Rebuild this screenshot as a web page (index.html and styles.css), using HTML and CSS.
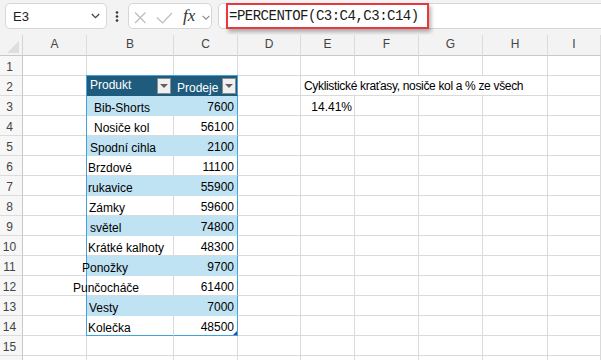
FILE: index.html
```html
<!DOCTYPE html>
<html lang="cs">
<head>
    <meta charset="UTF-8">
    <title>PERCENTOF</title>
    <link rel="stylesheet" href="styles.css">
</head>
<body>
    <div class="toolbar">
        <div class="name-box">
            <span>E3</span>
            <svg class="chevron" width="9" height="6" viewBox="0 0 9 6"><path d="M0.8 1l3.7 3.7 3.7-3.7" fill="none" stroke="#444" stroke-width="1.3"/></svg>
        </div>
        <svg class="kebab" width="4" height="11" viewBox="0 0 4 11"><circle cx="2" cy="1.5" r="1.3"/><circle cx="2" cy="5.5" r="1.3"/><circle cx="2" cy="9.5" r="1.3"/></svg>
        <div class="fn-box">
            <svg class="icon-x" width="14" height="12" viewBox="0 0 14 12"><path d="M2 0.5l10.5 10.5M12.5 0.5l-10.5 10.5" fill="none" stroke="#bcbcbc" stroke-width="1.2"/></svg>
            <svg class="icon-check" width="17" height="12" viewBox="0 0 17 12"><path d="M1 5.5l5.5 5.5 9.5-10" fill="none" stroke="#bcbcbc" stroke-width="1.2"/></svg>
            <span class="fx">fx</span>
            <svg class="chevron-sm" width="8" height="5" viewBox="0 0 8 5"><path d="M0.6 0.8l3.4 3.4 3.4-3.4" fill="none" stroke="#8a8a8a" stroke-width="1.1"/></svg>
        </div>
        <div class="formula-box">
            <span class="formula">=PERCENTOF(C3:C4,C3:C14)</span>
        </div>
    </div>

    <div class="sheet">
        <div class="corner"><div class="corner-tri"></div></div>
        <div class="ch">A</div>
        <div class="ch">B</div>
        <div class="ch">C</div>
        <div class="ch">D</div>
        <div class="ch">E</div>
        <div class="ch">F</div>
        <div class="ch">G</div>
        <div class="ch">H</div>
        <div class="ch">I</div>

        <!-- row 1 -->
        <div class="rh">1</div>
        <div class="c"></div><div class="c"></div><div class="c"></div><div class="c"></div>
        <div class="c"></div><div class="c"></div><div class="c"></div><div class="c"></div><div class="c"></div>

        <!-- row 2 -->
        <div class="rh">2</div>
        <div class="c"></div>
        <div class="c t-head t-name"><span class="head-text">Produkt</span><span class="filter"></span></div>
        <div class="c t-head t-val"><span class="head-text low">Prodeje</span><span class="filter"></span></div>
        <div class="c"></div>
        <div class="c note">Cyklistické kraťasy, nosiče kol a % ze všech</div>
        <div class="c"></div>

        <!-- row 3 -->
        <div class="rh">3</div>
        <div class="c"></div>
        <div class="c t-name band ind-7">Bib-Shorts</div>
        <div class="c t-val band">7600</div>
        <div class="c"></div>
        <div class="c num">14.41%</div>
        <div class="c"></div><div class="c"></div><div class="c"></div><div class="c"></div>

        <!-- row 4 -->
        <div class="rh">4</div>
        <div class="c"></div>
        <div class="c t-name ind-7">Nosiče kol</div>
        <div class="c t-val">56100</div>
        <div class="c"></div><div class="c"></div><div class="c"></div><div class="c"></div><div class="c"></div><div class="c"></div>

        <!-- row 5 -->
        <div class="rh">5</div>
        <div class="c"></div>
        <div class="c t-name band ind-3">Spodní cihla</div>
        <div class="c t-val band">2100</div>
        <div class="c"></div><div class="c"></div><div class="c"></div><div class="c"></div><div class="c"></div><div class="c"></div>

        <!-- row 6 -->
        <div class="rh">6</div>
        <div class="c"></div>
        <div class="c t-name ind-1">Brzdové</div>
        <div class="c t-val">11100</div>
        <div class="c"></div><div class="c"></div><div class="c"></div><div class="c"></div><div class="c"></div><div class="c"></div>

        <!-- row 7 -->
        <div class="rh">7</div>
        <div class="c"></div>
        <div class="c t-name band ind-1">rukavice</div>
        <div class="c t-val band">55900</div>
        <div class="c"></div><div class="c"></div><div class="c"></div><div class="c"></div><div class="c"></div><div class="c"></div>

        <!-- row 8 -->
        <div class="rh">8</div>
        <div class="c"></div>
        <div class="c t-name">Zámky</div>
        <div class="c t-val">59600</div>
        <div class="c"></div><div class="c"></div><div class="c"></div><div class="c"></div><div class="c"></div><div class="c"></div>

        <!-- row 9 -->
        <div class="rh">9</div>
        <div class="c"></div>
        <div class="c t-name band ind-3">světel</div>
        <div class="c t-val band">74800</div>
        <div class="c"></div><div class="c"></div><div class="c"></div><div class="c"></div><div class="c"></div><div class="c"></div>

        <!-- row 10 -->
        <div class="rh">10</div>
        <div class="c"></div>
        <div class="c t-name ind-1">Krátké kalhoty</div>
        <div class="c t-val">48300</div>
        <div class="c"></div><div class="c"></div><div class="c"></div><div class="c"></div><div class="c"></div><div class="c"></div>

        <!-- row 11 -->
        <div class="rh">11</div>
        <div class="c"></div>
        <div class="c t-name band out-5">Ponožky</div>
        <div class="c t-val band">9700</div>
        <div class="c"></div><div class="c"></div><div class="c"></div><div class="c"></div><div class="c"></div><div class="c"></div>

        <!-- row 12 -->
        <div class="rh">12</div>
        <div class="c"></div>
        <div class="c t-name out-14">Punčocháče</div>
        <div class="c t-val">61400</div>
        <div class="c"></div><div class="c"></div><div class="c"></div><div class="c"></div><div class="c"></div><div class="c"></div>

        <!-- row 13 -->
        <div class="rh">13</div>
        <div class="c"></div>
        <div class="c t-name band">Vesty</div>
        <div class="c t-val band">7000</div>
        <div class="c"></div><div class="c"></div><div class="c"></div><div class="c"></div><div class="c"></div><div class="c"></div>

        <!-- row 14 -->
        <div class="rh">14</div>
        <div class="c"></div>
        <div class="c t-name t-last ind-1">Kolečka</div>
        <div class="c t-val t-last resize">48500</div>
        <div class="c"></div><div class="c"></div><div class="c"></div><div class="c"></div><div class="c"></div><div class="c"></div>

        <!-- row 15 -->
        <div class="rh">15</div>
        <div class="c"></div><div class="c"></div><div class="c"></div><div class="c"></div>
        <div class="c"></div><div class="c"></div><div class="c"></div><div class="c"></div><div class="c"></div>

        <!-- row 16 -->
        <div class="rh"></div>
        <div class="c"></div><div class="c"></div><div class="c"></div><div class="c"></div>
        <div class="c"></div><div class="c"></div><div class="c"></div><div class="c"></div><div class="c"></div>
    </div>
</body>
</html>
```

FILE: styles.css
```css
* {
    box-sizing: border-box;
}

body {
    margin: 0;
    width: 601px;
    height: 360px;
    overflow: hidden;
    background-color: #ffffff;
    font-family: "Liberation Sans", Arial, sans-serif;
    color: #000;
}

/* formula bar */
.toolbar {
    display: flex;
    align-items: flex-start;
    height: 35px;
    padding-top: 3px;
    background-color: #f3f3f3;
}

.name-box {
    display: flex;
    align-items: center;
    justify-content: space-between;
    width: 102px;
    height: 26px;
    margin-left: 5px;
    padding: 0 6px 0 7px;
    background-color: #fff;
    border: 1px solid #d6d6d6;
    border-radius: 5px;
    font-size: 13px;
    color: #222;
}

.kebab {
    margin-left: 8px;
    margin-top: 8px;
    fill: #333;
}

.fn-box {
    display: flex;
    align-items: center;
    width: 84px;
    height: 26px;
    margin-left: 9px;
    padding-left: 4px;
    background-color: #fff;
    border: 1px solid #d6d6d6;
    border-radius: 5px;
}

.icon-x {
    margin-top: 4px;
}

.icon-check {
    margin-left: 9px;
    margin-top: 4px;
}

.fx {
    margin-left: 10px;
    font-family: "Liberation Serif", serif;
    font-style: italic;
    font-size: 17px;
    color: #333;
}

.chevron-sm {
    margin-left: 7px;
    margin-top: 2px;
}

.formula-box {
    flex: 1;
    height: 26px;
    margin-left: 6px;
    margin-right: -8px;
    padding-left: 7px;
    background-color: #fff;
    border: 1px solid #d6d6d6;
    border-radius: 5px;
}

.formula {
    display: inline-block;
    height: 26px;
    margin-top: -1px;
    padding: 0 8px 0 1px;
    border: 2px solid #e9383d;
    box-shadow: 2px 3px 4px rgba(0, 0, 0, 0.3);
    font-family: "Liberation Mono", monospace;
    font-size: 14px;
    letter-spacing: -0.5px;
    line-height: 22px;
    color: #1a1a1a;
}

/* grid */
.sheet {
    display: grid;
    grid-template-columns: 23px 64px 87px 64px 63px 54px 64px 64px 65px 53px;
    grid-template-rows: 21px;
    grid-auto-rows: 20px;
    font-size: 12px;
    line-height: 13px;
}

.corner {
    display: flex;
    align-items: flex-end;
    justify-content: flex-end;
    padding: 0 3px 2px 0;
    background-color: #f3f3f3;
    border-right: 1px solid #d4d4d4;
    border-bottom: 1px solid #c8c8c8;
}

.corner-tri {
    width: 0;
    height: 0;
    border-left: 12px solid transparent;
    border-bottom: 12px solid #dedede;
}

.ch {
    padding-top: 3px;
    text-align: center;
    color: #444;
    background-color: #f3f3f3;
    border-right: 1px solid #dcdcdc;
    border-bottom: 1px solid #c8c8c8;
}

.rh {
    padding: 5px 3px 0 0;
    text-align: center;
    color: #444;
    background-color: #f7f7f7;
    border-right: 1px solid #c8c8c8;
    border-bottom: 1px solid #dcdcdc;
}

.c {
    min-width: 0;
    padding-top: 6px;
    white-space: nowrap;
    border-right: 1px solid #dadada;
    border-bottom: 1px solid #dadada;
}

.note {
    grid-column: span 4;
    padding: 4px 0 0 3px;
    letter-spacing: -0.33px;
}

.num {
    padding: 5px 2px 0 0;
    text-align: right;
}

/* table B2:C14 */
.t-name {
    text-indent: 2px;
    box-shadow: -1px 0 0 #43a2da;
}

.ind-7 { text-indent: 7px; }
.ind-3 { text-indent: 3px; }
.ind-1 { text-indent: 1px; }
.out-5 { text-indent: -5px; }
.out-14 { text-indent: -14px; }

.t-val {
    padding: 5px 3px 0 0;
    text-align: right;
    border-right-color: #43a2da;
}

.band {
    background-color: #c0e3f4;
    border-bottom-color: #c0e3f4;
}

.band.t-name {
    border-right-color: #c0e3f4;
}

.t-last {
    border-bottom-color: #43a2da;
}

.t-head {
    display: flex;
    align-items: center;
    padding: 0;
    text-indent: 0;
    color: #fff;
    background-color: #1e5b7c;
    border-bottom-color: #1e5b7c;
}

.t-head.t-name {
    padding: 0 2px 0 3px;
    border-right-color: #1e5b7c;
    box-shadow: -1px 0 0 #43a2da, 0 -1px 0 #43a2da, -1px -1px 0 #43a2da;
}

.t-head.t-val {
    padding: 0 1px 0 3px;
    box-shadow: 0 -1px 0 #43a2da;
}

.head-text.low {
    align-self: flex-end;
}

.filter {
    display: flex;
    align-items: center;
    justify-content: center;
    width: 14px;
    height: 16px;
    margin-left: auto;
    background-color: #f0f0f0;
    border: 1px solid #8c8c8c;
}

.filter::after {
    content: "";
    border-left: 4px solid transparent;
    border-right: 4px solid transparent;
    border-top: 4px solid #606060;
}

.resize {
    position: relative;
}

.resize::after {
    content: "";
    position: absolute;
    right: 0;
    bottom: 0;
    border-left: 4px solid transparent;
    border-bottom: 4px solid #2a4f9c;
}
```
